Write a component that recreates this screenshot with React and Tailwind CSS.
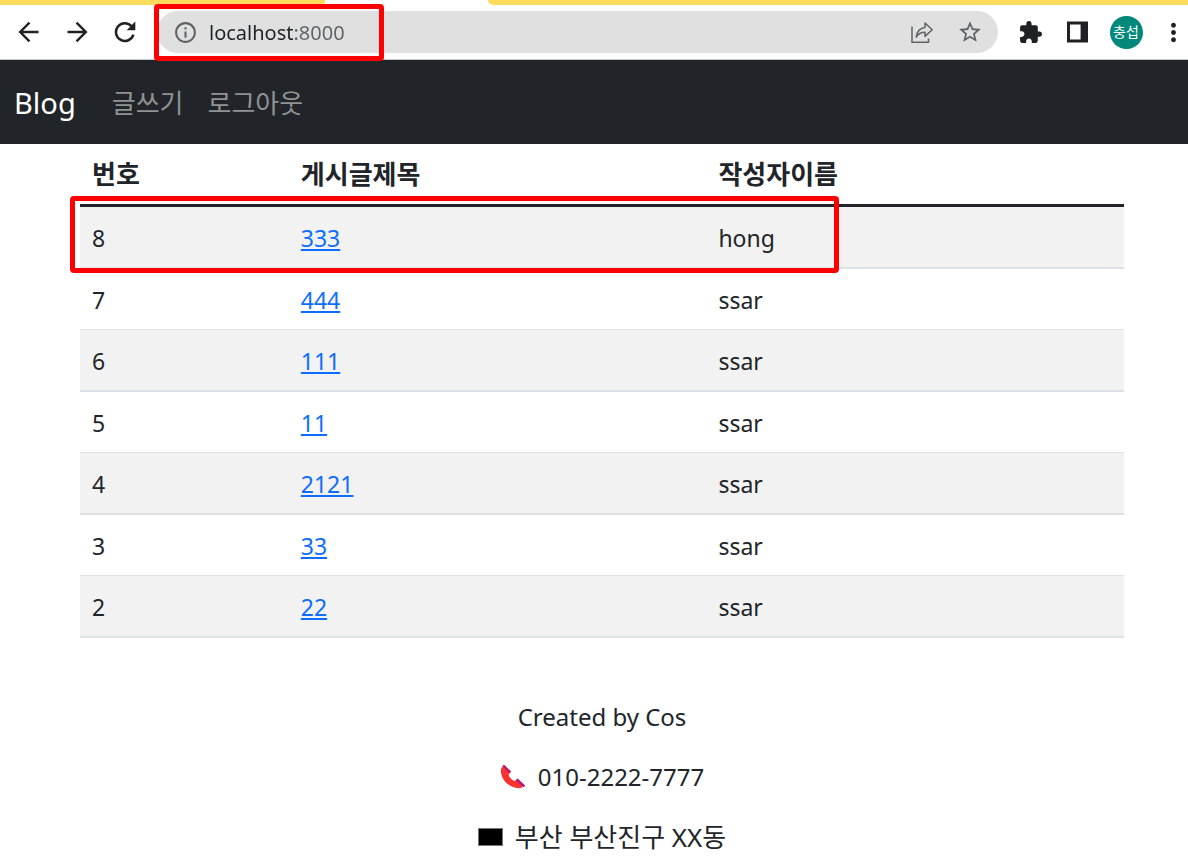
import React, { useState } from "react";
import { MdExtension, MdInfoOutline, MdMoreVert, MdStarBorder } from "react-icons/md";

const boards = [
  { id: 8, title: "333", username: "hong" },
  { id: 7, title: "444", username: "ssar" },
  { id: 6, title: "111", username: "ssar" },
  { id: 5, title: "11", username: "ssar" },
  { id: 4, title: "2121", username: "ssar" },
  { id: 3, title: "33", username: "ssar" },
  { id: 2, title: "22", username: "ssar" },
];

const ToolButton = ({ label, children }) => (
  <button type="button" aria-label={label} className="flex h-12 w-12 items-center justify-center text-[#202124]">
    {children}
  </button>
);

const ArrowIcon = ({ forward }) => (
  <svg
    width="22"
    height="22"
    viewBox="0 0 22 22"
    fill="none"
    stroke="currentColor"
    strokeWidth="2.4"
    className={forward ? "rotate-180" : ""}
  >
    <path d="M20.5 11H2.5M11.5 1.7L2.2 11l9.3 9.3" />
  </svg>
);

const ReloadIcon = () => (
  <svg width="22" height="22" viewBox="0 0 22 22">
    <path d="M17.6 5.2A8.9 8.9 0 1 0 19.4 13.6" fill="none" stroke="currentColor" strokeWidth="2.5" />
    <path d="M21.3 0.6V9.2H12.7z" fill="currentColor" />
  </svg>
);

const ShareIcon = () => (
  <svg width="24" height="24" viewBox="0 0 24 24" fill="none" stroke="currentColor" strokeWidth="1.5">
    <path d="M2 6.5V22.2H18.5V18.5" />
    <path d="M6.2 17.2C7 11.3 9.8 8.2 15 7.6V3L22.2 9.8L15 16.4V12.2C11 12.2 8.3 13.6 6.2 17.2Z" strokeLinejoin="round" />
  </svg>
);

const SidePanelIcon = () => (
  <svg width="22" height="22" viewBox="0 0 22 22">
    <path d="M0 0.5H21V21.5H0zM3 3.5V18.5H13V3.5z" fill="currentColor" fillRule="evenodd" />
    <path d="M13 3.5H14V18.5H13z" fill="#9aa0a6" />
  </svg>
);

const PhoneIcon = () => (
  <svg width="26" height="26" viewBox="0 0 26 26">
    <path
      d="M1.2 4.5L3 1.8L10.5 8.3L8.6 10.2C8.8 13.2 12.2 16.6 15 17L17 15L24 21.5L21.5 23.8C11.5 26.5 -1 15.5 1.2 4.5Z"
      fill="#fa312f"
    />
    <path d="M2.4 1.8L4.2 0.8L11.2 7.6L9.6 9.3zM15.8 16.2L17.6 14.4L25.2 21.4L23.6 23.2z" fill="#b4177e" />
  </svg>
);

// 브라우저 상단 툴바
const BrowserBar = () => {
  const [url, setUrl] = useState("localhost:8000");

  return (
    <div className="border-b border-[#c6c8ca] bg-white">
      {/* 탭 */}
      <div className="flex h-[5px]">
        <div className="w-[325px] rounded-br-sm bg-[#ffdc5c]"></div>
        <div className="w-[163px]"></div>
        <div className="flex-1 rounded-bl-lg bg-[#ffdc5c]"></div>
      </div>

      <div className="flex h-[54px] items-center pl-[5px]">
        <ToolButton label="뒤로">
          <ArrowIcon />
        </ToolButton>
        <ToolButton label="앞으로">
          <ArrowIcon forward />
        </ToolButton>
        <ToolButton label="새로고침">
          <ReloadIcon />
        </ToolButton>

        <div className="relative mx-2 flex h-[42px] min-w-0 flex-1 items-center rounded-full bg-[#e0e0e0] pl-4 text-[#5f6368]">
          <MdInfoOutline size={25} />
          <input
            type="text"
            aria-label="주소창"
            value={url}
            onChange={(e) => setUrl(e.target.value)}
            className="ml-[11px] h-8 min-w-0 flex-1 bg-[linear-gradient(to_right,#202124_84px,#5f6368_84px)] bg-clip-text text-xl text-transparent caret-black outline-none"
          />
          <button type="button" aria-label="공유" className="flex h-10 w-12 items-center justify-center">
            <ShareIcon />
          </button>
          <button type="button" aria-label="북마크" className="mr-1 flex h-10 w-12 items-center justify-center">
            <MdStarBorder size={26} />
          </button>
          {/* 주소 강조 박스 */}
          <div className="pointer-events-none absolute -top-[7px] -left-[3px] h-[57px] w-[230px] rounded-sm border-5 border-[#ff0000]"></div>
        </div>

        <ToolButton label="확장 프로그램">
          <MdExtension size={25} />
        </ToolButton>
        <ToolButton label="사이드 패널">
          <SidePanelIcon />
        </ToolButton>
        <ToolButton label="프로필">
          <span className="flex h-[33px] w-[33px] items-center justify-center rounded-full bg-[#00897b] text-sm text-white">
            충섭
          </span>
        </ToolButton>
        <button type="button" aria-label="메뉴" className="ml-2 flex h-12 w-[30px] items-center justify-center text-[#202124]">
          <MdMoreVert size={29} className="shrink-0" />
        </button>
      </div>
    </div>
  );
};

const Navbar = () => (
  <nav className="flex h-[84px] items-center bg-[#212529] px-3.5 pt-0.5">
    <a href="#home" className="text-[29px] text-white">
      Blog
    </a>
    <a href="#write" className="ml-9 text-[26px] text-[#909294]">
      글쓰기
    </a>
    <a href="#logout" className="ml-6 text-[26px] text-[#909294]">
      로그아웃
    </a>
  </nav>
);

const BoardList = () => (
  <div className="relative">
    <table className="w-full table-fixed border-separate border-spacing-0 text-left">
      <thead>
        <tr className="text-[26px] leading-9">
          <th className="w-1/5 border-b-3 border-[#212529] p-3 font-bold">번호</th>
          <th className="w-2/5 border-b-3 border-[#212529] p-3 font-bold">게시글제목</th>
          <th className="w-2/5 border-b-3 border-[#212529] p-3 font-bold">작성자이름</th>
        </tr>
      </thead>
      <tbody className="text-[23px] leading-9 [&_td]:border-b [&_td]:border-[#dee2e6] [&_td]:px-3 [&_td]:pt-[13px] [&_td]:pb-[11px] [&_tr:nth-child(odd)_td]:border-b-2 [&_tr:nth-child(odd)]:bg-[#f2f2f2]">
        {boards.map((board) => (
          <tr key={board.id}>
            <td>{board.id}</td>
            <td>
              <a href={`#board-${board.id}`} className="text-[#0d6efd] underline decoration-2 underline-offset-2">
                {board.title}
              </a>
            </td>
            <td>{board.username}</td>
          </tr>
        ))}
      </tbody>
    </table>
    {/* 새 글 강조 박스 */}
    <div className="pointer-events-none absolute top-[52px] -left-[10px] h-[77px] w-[769px] rounded-sm border-5 border-[#ff0000]"></div>
  </div>
);

const Footer = () => (
  <footer className="mt-[61px] flex flex-col items-center gap-6 pb-3 text-2xl leading-9">
    <p>Created by Cos</p>
    <p className="flex items-center gap-3">
      <PhoneIcon />
      010-2222-7777
    </p>
    <p className="flex items-center gap-3">
      <span className="h-[18px] w-[25px] border border-[#777777] bg-black"></span>
      <span className="text-[26px]">부산 부산진구 XX동</span>
    </p>
  </footer>
);

const App = () => {
  return (
    <div className="min-h-screen bg-white font-['Noto_Sans','Noto_Sans_CJK_KR',sans-serif] text-[#212529]">
      <BrowserBar />
      <Navbar />
      <main className="pr-16 pl-20">
        <BoardList />
        <Footer />
      </main>
    </div>
  );
};

export default App;
